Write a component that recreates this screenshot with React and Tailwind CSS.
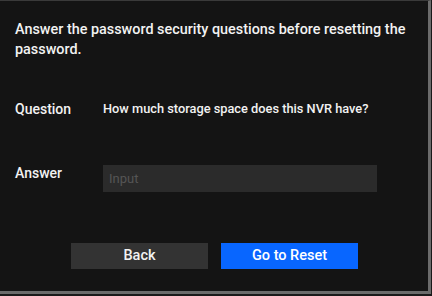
import React from "react";

const ResetQuestionDialog = () => {
  return (
    <div
      className="w-[432px] h-[296px] bg-[#1a1a1a] overflow-hidden"
      style={{ fontFamily: "Roboto, 'Noto Sans', sans-serif" }}
    >
      <div className="w-[431px] h-[294px] border-t border-[#3a3a3a] border-r-[3px] border-b-[3px] border-r-[#6b6b6b] border-b-[#6b6b6b] bg-[#141414] flex flex-col">
        <p className="pl-[15px] pr-[4px] pt-[19px] text-[14.4px] font-medium leading-[20px] text-[#f2f2f2]">
          Answer the password security questions before resetting the password.
        </p>

        <div className="flex items-center pl-[15px] mt-[39px] h-[20px]">
          <span className="w-[88px] text-[14px] font-medium text-[#f2f2f2]">Question</span>
          <span className="text-[12.8px] font-medium text-[#f2f2f2]">
            How much storage space does this NVR have?
          </span>
        </div>

        <div className="flex items-start pl-[15px] mt-[46px]">
          <span className="w-[88px] text-[14px] font-medium leading-[16px] text-[#f2f2f2]">Answer</span>
          <input
            placeholder="Input"
            className="w-[274px] h-[27px] bg-[#2b2b2b] px-[6px] text-[13px] text-white placeholder:text-[#555555] outline-none"
          />
        </div>

        <div className="flex gap-[13px] pl-[71px] mt-[51px]">
          <button className="w-[137px] h-[26px] bg-[#333333] text-[14.5px] font-medium text-[#f2f2f2]">
            Back
          </button>
          <button className="w-[137px] h-[26px] bg-[#0866ff] text-[14.5px] font-medium text-white">
            Go to Reset
          </button>
        </div>
      </div>
    </div>
  );
};

export default function App() {
  return <ResetQuestionDialog />;
}
